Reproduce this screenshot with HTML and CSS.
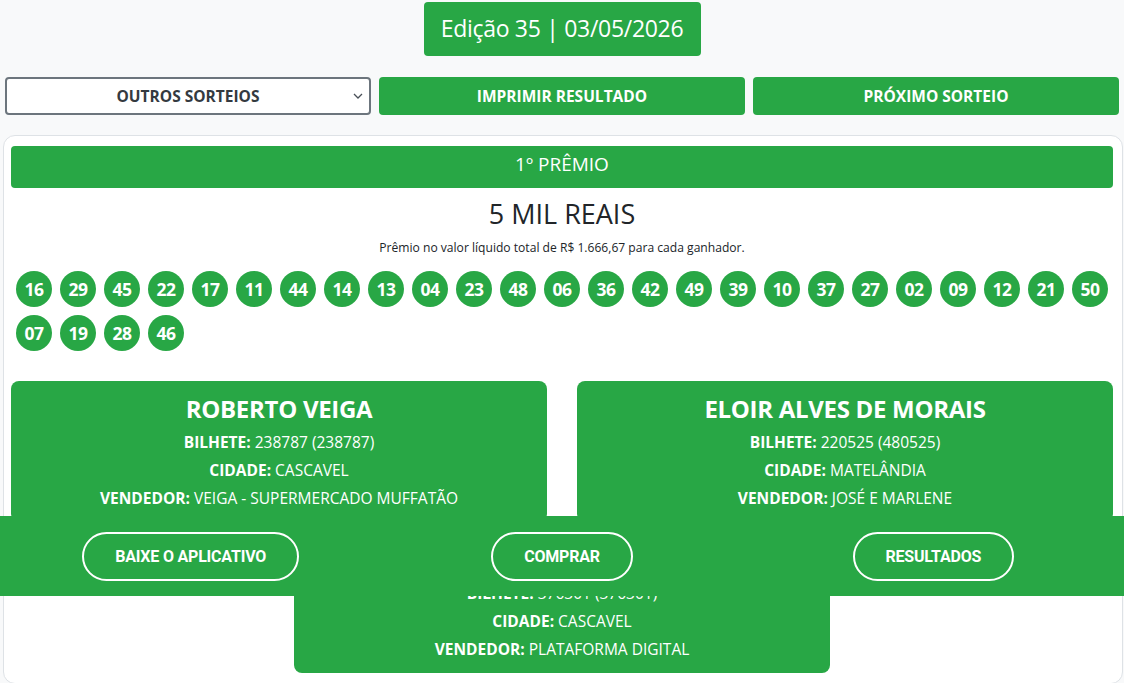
FILE: index.html
```html
<!DOCTYPE html>
<html lang="pt-BR">
<head>
<meta charset="utf-8">
<title>Resultado - Edição 35</title>
<link rel="stylesheet" href="styles.css">
</head>
<body>
<header class="top">
  <div class="edition">Edição 35 | 03/05/2026</div>
</header>

<nav class="actions">
  <div class="select-wrap">
    <select class="draw-select">
      <option>OUTROS SORTEIOS</option>
    </select>
    <svg class="chev" width="10" height="6" viewBox="0 0 10 6"><path d="M1 1l4 4 4-4" fill="none" stroke="#495057" stroke-width="1.3"/></svg>
  </div>
  <button class="btn">IMPRIMIR RESULTADO</button>
  <button class="btn">PRÓXIMO SORTEIO</button>
</nav>

<main class="panel">
  <div class="prize-bar">1º PRÊMIO</div>
  <div class="prize-value">5 MIL REAIS</div>
  <div class="prize-note">Prêmio no valor líquido total de R$ 1.666,67 para cada ganhador.</div>

  <div class="balls">
    <span class="ball">16</span><span class="ball">29</span><span class="ball">45</span><span class="ball">22</span><span class="ball">17</span><span class="ball">11</span><span class="ball">44</span><span class="ball">14</span><span class="ball">13</span><span class="ball">04</span><span class="ball">23</span><span class="ball">48</span><span class="ball">06</span><span class="ball">36</span><span class="ball">42</span><span class="ball">49</span><span class="ball">39</span><span class="ball">10</span><span class="ball">37</span><span class="ball">27</span><span class="ball">02</span><span class="ball">09</span><span class="ball">12</span><span class="ball">21</span><span class="ball">50</span>
    <span class="ball">07</span><span class="ball">19</span><span class="ball">28</span><span class="ball">46</span>
  </div>

  <section class="winners">
    <div class="winner">
      <h2 class="w-name">ROBERTO VEIGA</h2>
      <p class="w-line"><b>BILHETE:</b> 238787 (238787)</p>
      <p class="w-line"><b>CIDADE:</b> CASCAVEL</p>
      <p class="w-line"><b>VENDEDOR:</b> VEIGA - SUPERMERCADO MUFFATÃO</p>
    </div>
    <div class="winner">
      <h2 class="w-name">ELOIR ALVES DE MORAIS</h2>
      <p class="w-line"><b>BILHETE:</b> 220525 (480525)</p>
      <p class="w-line"><b>CIDADE:</b> MATELÂNDIA</p>
      <p class="w-line"><b>VENDEDOR:</b> JOSÉ E MARLENE</p>
    </div>
    <div class="winner">
      <h2 class="w-name">ADRIANO DA SILVA</h2>
      <p class="w-line"><b>BILHETE:</b> 376301 (376301)</p>
      <p class="w-line"><b>CIDADE:</b> CASCAVEL</p>
      <p class="w-line"><b>VENDEDOR:</b> PLATAFORMA DIGITAL</p>
    </div>
  </section>
</main>

<footer class="app-bar">
  <div class="app-col"><a class="pill">BAIXE O APLICATIVO</a></div>
  <div class="app-col"><a class="pill">COMPRAR</a></div>
  <div class="app-col"><a class="pill">RESULTADOS</a></div>
</footer>
</body>
</html>
```

FILE: styles.css
```css
* { box-sizing: border-box; }

body {
  margin: 0;
  background: #f8f9fa;
  font-family: "Open Sans", "Noto Sans", sans-serif;
  color: #212529;
}

.top {
  display: flex;
  justify-content: center;
  padding-top: 2px;
}

.edition {
  background: #28a745;
  color: #fff;
  border-radius: 4px;
  height: 54px;
  width: 277px;
  display: flex;
  align-items: center;
  justify-content: center;
  font-size: 23px;
  letter-spacing: -0.3px;
  padding-bottom: 2px;
}

.actions {
  display: grid;
  grid-template-columns: 1fr 1fr 1fr;
  gap: 8px;
  padding: 0 5px;
  margin-top: 21px;
  height: 38px;
}

.select-wrap {
  position: relative;
}

.draw-select {
  appearance: none;
  -webkit-appearance: none;
  width: 100%;
  height: 38px;
  border: 2px solid #6c757d;
  border-radius: 4px;
  background: #fff;
  font-family: "Open Sans", sans-serif;
  font-weight: 700;
  font-size: 15.5px;
  color: #343a40;
  text-align: center;
  text-align-last: center;
  padding: 0 20px;
}

.chev {
  position: absolute;
  right: 8px;
  top: 16px;
}

.btn {
  background: #28a745;
  border: none;
  border-radius: 4px;
  color: #fff;
  font-family: "Open Sans", sans-serif;
  font-weight: 700;
  font-size: 15.5px;
  height: 38px;
}

.panel {
  margin: 20px 1px 0 3px;
  background: #fff;
  border: 1px solid #dee2e6;
  border-radius: 12px;
  padding: 10px 9px 10px 7px;
}

.prize-bar {
  background: #28a745;
  color: #fff;
  border-radius: 4px;
  height: 42px;
  display: flex;
  align-items: center;
  justify-content: center;
  font-size: 19px;
  padding-bottom: 6px;
}

.prize-value {
  text-align: center;
  font-size: 27px;
  line-height: 44px;
  margin-top: 4px;
}

.prize-note {
  text-align: center;
  font-size: 12.1px;
  line-height: 20px;
  margin-top: 2px;
}

.balls {
  display: flex;
  flex-wrap: wrap;
  gap: 8px;
  padding-left: 5px;
  margin-top: 13px;
}

.ball {
  width: 36px;
  height: 36px;
  border-radius: 50%;
  background: #28a745;
  color: #fff;
  font-weight: 700;
  font-size: 17.5px;
  letter-spacing: -0.5px;
  display: flex;
  align-items: center;
  justify-content: center;
}

.winners {
  display: flex;
  flex-wrap: wrap;
  justify-content: center;
  column-gap: 30px;
  row-gap: 10px;
  margin-top: 30px;
}

.winner {
  width: 536px;
  background: #28a745;
  color: #fff;
  border-radius: 8px;
  padding: 8px 10px 10px;
  text-align: center;
}

.w-name {
  margin: 0;
  font-size: 24px;
  font-weight: 700;
  line-height: 39px;
  letter-spacing: -0.3px;
}

.w-line {
  margin: 0;
  font-size: 15.5px;
  line-height: 28px;
}

.w-line b {
  font-weight: 700;
}

.app-bar {
  position: fixed;
  left: 0;
  right: 0;
  bottom: 87px;
  height: 80px;
  background: #28a745;
  display: grid;
  grid-template-columns: 1fr 1fr 1fr;
  align-items: center;
  padding: 0 5px;
}

.app-col {
  display: flex;
  justify-content: center;
}

.pill {
  display: inline-flex;
  align-items: center;
  height: 49px;
  padding: 0 31px;
  border: 2px solid #fff;
  border-radius: 25px;
  color: #fff;
  font-family: Roboto, sans-serif;
  font-weight: 700;
  font-size: 16px;
  letter-spacing: -0.2px;
}
```
